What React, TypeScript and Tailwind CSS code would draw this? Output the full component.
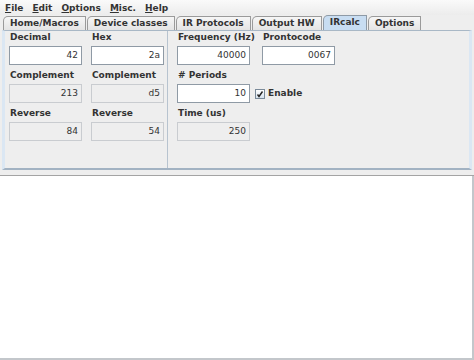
const MENUS = ['File', 'Edit', 'Options', 'Misc.', 'Help'];

const TABS = [
  { label: 'Home/Macros', active: false },
  { label: 'Device classes', active: false },
  { label: 'IR Protocols', active: false },
  { label: 'Output HW', active: false },
  { label: 'IRcalc', active: true },
  { label: 'Options', active: false },
];

function Label({ children }: { children: string }) {
  return <div className="h-[12px] leading-[12px] text-[9px] font-bold text-[#333333] pl-[1px] whitespace-nowrap">{children}</div>;
}

function Field({ value, disabled = false }: { value: string; disabled?: boolean }) {
  return (
    <div
      className={`mt-[3px] w-[73px] h-[19px] flex items-center justify-end pr-[3px] text-[9px] text-[#333333] border ${
        disabled ? 'bg-[#eeeeee] border-[#c9ccd0]' : 'bg-white border-[#8f9aa5]'
      }`}
    >
      {value}
    </div>
  );
}

function Cell({ label, value, disabled = false, first = false }: { label: string; value: string; disabled?: boolean; first?: boolean }) {
  return (
    <div className={`w-[73px] ${first ? '' : 'mt-[4px]'}`}>
      <Label>{label}</Label>
      <Field value={value} disabled={disabled} />
    </div>
  );
}

export default function App() {
  return (
    <div className="w-[474px] h-[360px] flex flex-col bg-[#eeeeee] font-['DejaVu_Sans',sans-serif] text-[#333333] overflow-hidden">
      {/* menu bar */}
      <div className="h-[15px] flex items-center pl-[1px] gap-[1px] bg-gradient-to-b from-[#fafafa] to-[#ececec]">
        {MENUS.map((m) => (
          <span key={m} className="px-[4px] text-[9px] font-bold text-[#333333] leading-[12px]">
            <span className="underline underline-offset-[1px]">{m[0]}</span>
            {m.slice(1)}
          </span>
        ))}
      </div>

      {/* tabs */}
      <div className="h-[15px] flex items-end pl-[3px] gap-[1px]">
        {TABS.map((t) => (
          <div
            key={t.label}
            className={`h-[14px] flex items-center pl-[6px] pr-[6px] text-[9px] font-bold text-[#333333] border border-b-0 rounded-tl-[5px] ${
              t.active
                ? 'bg-[#c8ddf2] border-[#8e9aa6] h-[15px]'
                : 'bg-gradient-to-b from-[#f6f6f6] to-[#e4e4e4] border-[#9a9a9a]'
            }`}
          >
            {t.label}
          </div>
        ))}
      </div>

      {/* tab content */}
      <div className="mx-[2px] h-[140px] flex border-t border-x-[3px] border-b-[2px] border-t-[#a9b8c6] border-x-[#dbe7f3] border-b-[#a2b2c2] bg-[#eeeeee]">
        <div className="w-[163px] pl-[4px] flex gap-[9px] border-r border-[#b7c3cf]">
          <div className="flex flex-col">
            <Cell first label="Decimal" value="42" />
            <Cell label="Complement" value="213" disabled />
            <Cell label="Reverse" value="84" disabled />
          </div>
          <div className="flex flex-col">
            <Cell first label="Hex" value="2a" />
            <Cell label="Complement" value="d5" disabled />
            <Cell label="Reverse" value="54" disabled />
          </div>
        </div>
        <div className="pl-[9px] flex flex-col">
          <div className="flex gap-[12px]">
            <Cell first label="Frequency (Hz)" value="40000" />
            <Cell first label="Prontocode" value="0067" />
          </div>
          <div className="mt-[4px]">
            <Label># Periods</Label>
            <div className="flex items-center">
              <Field value="10" />
              <div className="mt-[3px] ml-[5px] flex items-center">
                <div className="w-[10px] h-[10px] border border-[#7a8a99] bg-gradient-to-b from-[#ffffff] to-[#d6e2ee] flex items-center justify-center">
                  <svg width="8" height="8" viewBox="0 0 8 8">
                    <path d="M1.5 4.5 L3 6.5 L6.5 1.5" stroke="#222222" strokeWidth="1.4" fill="none" />
                  </svg>
                </div>
                <span className="ml-[3px] text-[9px] font-bold text-[#333333]">Enable</span>
              </div>
            </div>
          </div>
          <Cell label="Time (us)" value="250" disabled />
        </div>
      </div>

      {/* split divider */}
      <div className="h-[6px] border-b border-[#a4a4a4]" />

      {/* output area */}
      <div className="flex-1 bg-white border-r-[2px] border-b-[2px] border-[#c3c7cb]" />
    </div>
  );
}
